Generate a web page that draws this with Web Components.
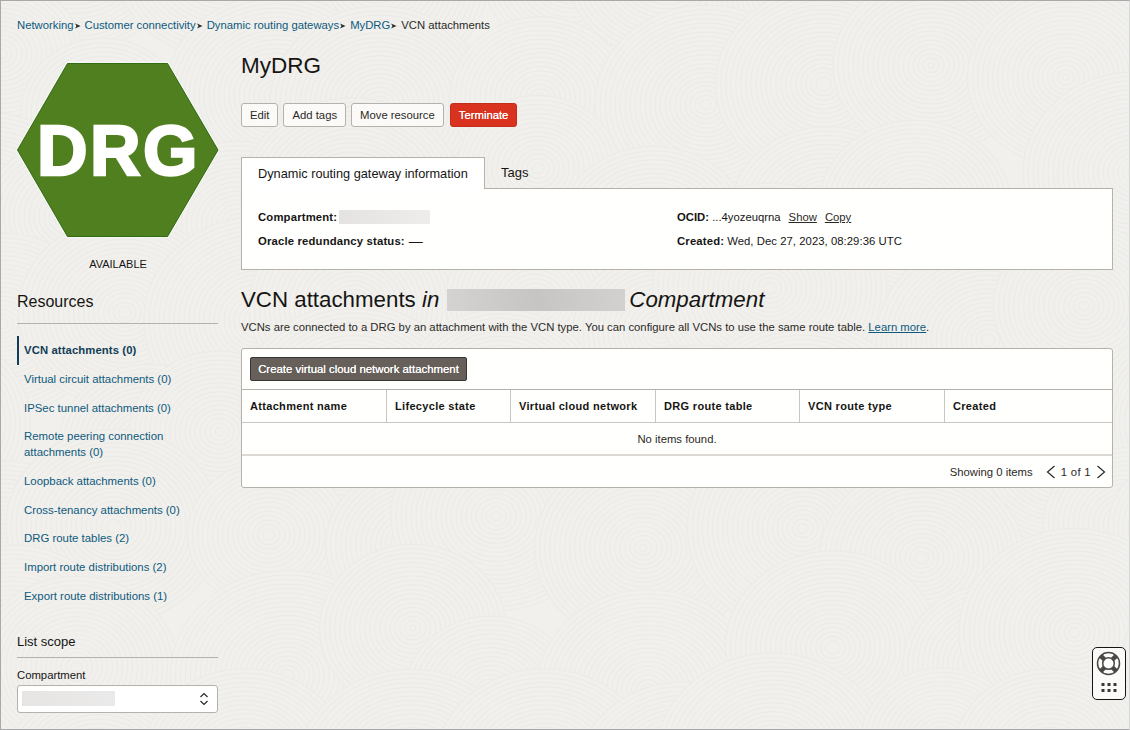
<!DOCTYPE html>
<html lang="en">
<head>
<meta charset="utf-8">
<title>MyDRG</title>
<style>
  html, body { margin: 0; height: 100%; }
  body { font: 11.3px/16px "Liberation Sans", Arial, sans-serif; color: #161513; background: #f1f0ed; }
</style>
</head>
<body>
<oci-page>
  <oci-breadcrumb slot="crumbs" items="Networking|Customer connectivity|Dynamic routing gateways|MyDRG|VCN attachments"></oci-breadcrumb>
  <oci-sidebar slot="side"></oci-sidebar>
  <oci-details slot="main"></oci-details>
  <oci-attachments slot="main"></oci-attachments>
</oci-page>
<oci-help></oci-help>

<script>
class OciPage extends HTMLElement {
  constructor() {
    super();
    this.attachShadow({ mode: "open" });
  }

  static get styles() {
    return /* css */`
      :host {
        display: block;
        position: relative;
        box-sizing: border-box;
        width: 1130px;
        height: 730px;
        overflow: hidden;
        border: 1px solid #a9a9a9;
        border-right-color: #d8d8d8;
      }
      .swirls { position: absolute; inset: 0; width: 100%; height: 100%; }
      .content {
        position: relative;
        display: grid;
        grid-template-columns: 201px 872px;
        column-gap: 23px;
        padding: 16px 0 0 16px;
      }
      .crumbs { grid-column: 1 / 3; height: 34px; }
      .side { padding-top: 12px; }
      .main { padding-top: 1px; }
    `;
  }

  swirls() {
    // jittered grid of concentric rings, later ones cover earlier ones
    let out = "";
    let seed = 11;
    const rnd = () => (seed = (seed * 9301 + 49297) % 233280) / 233280;
    for (let y = -30; y < 820; y += 115) {
      for (let x = -30; x < 1240; x += 140) {
        const cx = x + rnd() * 90 - 45;
        const cy = y + rnd() * 70 - 35;
        const r = 78 + rnd() * 40;
        out += `<ellipse cx="${cx}" cy="${cy}" rx="${r}" ry="${r * 0.9}" fill="#f1f0ed" stroke="none"/>`;
        for (let i = r; i > 3; i -= 5) {
          out += `<ellipse cx="${cx}" cy="${cy}" rx="${i}" ry="${i * 0.9}" fill="none"/>`;
        }
      }
    }
    return out;
  }

  connectedCallback() {
    this.shadowRoot.innerHTML = /* html */`
      <style>${OciPage.styles}</style>
      <svg class="swirls" stroke="#ecebe7" stroke-width="1.2">${this.swirls()}</svg>
      <div class="content">
        <div class="crumbs"><slot name="crumbs"></slot></div>
        <div class="side"><slot name="side"></slot></div>
        <div class="main"><slot name="main"></slot></div>
      </div>
    `;
  }
}

class OciBreadcrumb extends HTMLElement {
  constructor() {
    super();
    this.attachShadow({ mode: "open" });
  }

  connectedCallback() {
    const items = this.getAttribute("items").split("|");
    const sep = `<svg width="6" height="6" viewBox="0 0 6 6"><path d="M0 .5 5.500 3 0 5.500 1.500 3z" fill="#2c2a27"/></svg>`;
    this.shadowRoot.innerHTML = /* html */`
      <style>
        :host { display: block; }
        div { display: flex; align-items: center; line-height: 16px; }
        span { color: #0e5a7d; }
        span:last-child { color: #2c2a27; }
        svg { margin: 1px 4px 0 1px; }
      </style>
      <div>${items.map((t, i) => `<span>${t}</span>${i < items.length - 1 ? sep : ""}`).join("")}</div>
    `;
  }
}

class OciSidebar extends HTMLElement {
  constructor() {
    super();
    this.attachShadow({ mode: "open" });
  }

  static get styles() {
    return /* css */`
      :host { display: block; }
      .logo { display: block; width: 201px; height: 175px; overflow: visible; }
      .state { text-align: center; margin-top: 18px; color: #161513; font-size: 11px; padding-left: 1px; }
      h3 { font-size: 16px; line-height: 20px; font-weight: 400; margin: 20px 0 0; padding-bottom: 11px; border-bottom: 1px solid #b5b1ab; }
      nav { margin-top: 12px; display: flex; flex-direction: column; font-size: 11.4px; }
      a {
        display: block;
        padding: 6.33px 16px 6.33px 7px;
        line-height: 16px;
        color: #0e5a7d;
      }
      a.on { font-weight: 700; color: #123d57; border-left: 2px solid #123d57; padding-left: 5px; font-size: 11.3px; letter-spacing: .1px; }
      .scope { font-size: 13px; line-height: 18px; margin-top: 23px; padding-bottom: 6px; border-bottom: 1px solid #b5b1ab; }
      label { display: block; margin-top: 9px; line-height: 16px; }
      .select {
        box-sizing: border-box;
        display: flex;
        align-items: center;
        justify-content: space-between;
        height: 28px;
        margin-top: 2px;
        padding: 0 8px 0 4px;
        background: #fff;
        border: 1px solid #b5b1ab;
        border-radius: 3px;
      }
      .blur { width: 93px; height: 15px; background: linear-gradient(90deg, #e6e5e3, #ebeaea); }
    `;
  }

  connectedCallback() {
    const links = [
      "Virtual circuit attachments (0)",
      "IPSec tunnel attachments (0)",
      "Remote peering connection attachments (0)",
      "Loopback attachments (0)",
      "Cross-tenancy attachments (0)",
      "DRG route tables (2)",
      "Import route distributions (2)",
      "Export route distributions (1)"
    ];
    this.shadowRoot.innerHTML = /* html */`
      <style>${OciSidebar.styles}</style>
      <svg class="logo" viewBox="0 0 201 175">
        <path d="M50.500 .5h100L201 87 150.500 173.500h-100L.5 87z" fill="#4f7f1f" stroke="#fbfaf8" stroke-width="3" stroke-opacity=".6"/>
        <path d="M50.500 .5h100L201 87 150.500 173.500h-100L.5 87z" fill="#4f7f1f" stroke="#2f6d12" stroke-width="1"/>
        <text x="101.500" y="111.500" text-anchor="middle" fill="#fff" stroke="#fff" stroke-width="2.400" letter-spacing="2.500" font-family="Liberation Sans" font-weight="700" font-size="70">DRG</text>
      </svg>
      <div class="state">AVAILABLE</div>
      <h3>Resources</h3>
      <nav>
        <a class="on">VCN attachments (0)</a>
        ${links.map(t => `<a>${t}</a>`).join("")}
      </nav>
      <div class="scope">List scope</div>
      <label>Compartment</label>
      <div class="select">
        <div class="blur"></div>
        <svg width="10" height="14" viewBox="0 0 10 14" fill="none" stroke="#2c2a27" stroke-width="1.200"><path d="M1.500 5 5 1.500 8.500 5M1.500 9 5 12.500 8.500 9"/></svg>
      </div>
    `;
  }
}

class OciDetails extends HTMLElement {
  constructor() {
    super();
    this.attachShadow({ mode: "open" });
  }

  static get styles() {
    return /* css */`
      :host { display: block; }
      h1 { font-size: 22.5px; line-height: 28px; font-weight: 400; margin: 0; }
      .actions { display: flex; gap: 5px; margin-top: 23px; }
      button {
        font: 11.3px/16px "Liberation Sans", Arial, sans-serif;
        height: 24px;
        padding: 0 8px;
        color: #2c2a27;
        background: #fbfaf8;
        border: 1px solid #b5b1ab;
        border-radius: 3px;
      }
      button.danger { margin-left: 1px; color: #fff; background: #d9321f; border-color: #c42d1b; text-shadow: 0 0 .6px #fff; }
      .tabs { display: flex; margin-top: 30px; position: relative; z-index: 1; }
      .tab { box-sizing: border-box; height: 32px; padding: 7px 16px 0; font-size: 13px; line-height: 18px; white-space: nowrap; }
      .tab.on { width: 244px; background: #fff; border: 1px solid #b5b1ab; border-bottom: 0; font-size: 12.750px; }
      .panel {
        box-sizing: border-box;
        height: 82px;
        margin-top: -1px;
        padding: 20px 16px 0;
        background: #fffffe;
        border: 1px solid #b5b1ab;
        display: grid;
        grid-template-columns: 419px 1fr;
        grid-auto-rows: 24px;
      }
      .row { display: flex; align-items: center; height: 16px; white-space: pre; }
      b { letter-spacing: .17px; }
      b.tight { letter-spacing: 0; }
      u { margin-left: 8px; color: #2c2a27; }
      .date { margin-left: 3px; letter-spacing: .05px; }
      .dash { margin-left: 4px; font-size: 14px; line-height: 16px; }
      .blur { width: 91px; height: 14px; margin-left: 2px; background: linear-gradient(90deg, #e4e3e1, #eeedeb); }
    `;
  }

  connectedCallback() {
    this.shadowRoot.innerHTML = /* html */`
      <style>${OciDetails.styles}</style>
      <h1>MyDRG</h1>
      <div class="actions">
        <button>Edit</button><button>Add tags</button><button>Move resource</button><button class="danger">Terminate</button>
      </div>
      <div class="tabs">
        <div class="tab on">Dynamic routing gateway information</div>
        <div class="tab off">Tags</div>
      </div>
      <div class="panel">
        <div class="row"><b>Compartment:</b><div class="blur"></div></div>
        <div class="row"><b class="tight">OCID:</b> ...4yozeuqrna<u>Show</u><u>Copy</u></div>
        <div class="row"><b>Oracle redundancy status:</b><span class="dash">&#8212;</span></div>
        <div class="row"><b>Created:</b><span class="date">Wed, Dec 27, 2023, 08:29:36 UTC</span></div>
      </div>
    `;
  }
}

class OciAttachments extends HTMLElement {
  constructor() {
    super();
    this.attachShadow({ mode: "open" });
  }

  static get styles() {
    return /* css */`
      :host { display: block; }
      h2 { display: flex; align-items: center; font-size: 22.300px; line-height: 28px; font-weight: 400; margin: 16px 0 0; white-space: pre; }
      .blur { width: 178px; height: 22px; margin: 0 4px 0 8px; background: linear-gradient(90deg, #d4d3d1, #c6c5c3 50%, #d2d1cf); }
      p { margin: 5px 0 0; line-height: 16px; color: #2c2a27; white-space: nowrap; }
      p a { color: #0e5a7d; text-decoration: underline; }
      .card {
        box-sizing: border-box;
        height: 140px;
        margin-top: 13px;
        background: #fffffe;
        border: 1px solid #b5b1ab;
        border-radius: 3px;
      }
      .bar { height: 41px; box-sizing: border-box; padding: 8px; border-bottom: 1px solid #b5b1ab; }
      .create {
        font: 11.4px/16px "Liberation Sans", Arial, sans-serif;
        display: block;
        height: 24px;
        width: 217px;
        padding: 0;
        color: #fff;
        text-shadow: 0 0 .5px #fff;
        background: #665f5a;
        border: 1px solid #3a3631;
        border-radius: 2px;
      }
      .head { display: grid; grid-template-columns: 144px 124px 145px 144px 145px 1fr; height: 33px; box-sizing: border-box; border-bottom: 1px solid #c9c6c1; font-size: 11px; }
      .head div { padding: 8px 8px 0; font-weight: 700; letter-spacing: .32px; border-left: 1px solid #c9c6c1; line-height: 16px; }
      .head div:first-child { border-left: 0; }
      .empty { height: 33px; box-sizing: border-box; padding-top: 8px; text-align: center; border-bottom: 2px solid #dcd9d5; color: #2c2a27; }
      .foot { display: flex; align-items: center; justify-content: flex-end; height: 31px; padding-right: 6px; color: #2c2a27; }
      .foot svg { display: block; }
      .pages { margin: 0 5px; letter-spacing: .35px; }
      .count { margin-right: 13px; }
    `;
  }

  connectedCallback() {
    this.shadowRoot.innerHTML = /* html */`
      <style>${OciAttachments.styles}</style>
      <h2>VCN attachments <i>in</i><span class="blur"></span><i>Compartment</i></h2>
      <p>VCNs are connected to a DRG by an attachment with the VCN type. You can configure all VCNs to use the same route table. <a>Learn more</a>.</p>
      <div class="card">
        <div class="bar"><button class="create">Create virtual cloud network attachment</button></div>
        <div class="head">
          <div>Attachment name</div><div>Lifecycle state</div><div>Virtual cloud network</div><div>DRG route table</div><div>VCN route type</div><div>Created</div>
        </div>
        <div class="empty">No items found.</div>
        <div class="foot">
          <span class="count">Showing 0 items</span>
          <svg width="10" height="14" viewBox="0 0 10 14" fill="none" stroke="#2c2a27" stroke-width="1.200"><path d="M8.500 1 1.500 7l7 6"/></svg>
          <span class="pages">1 of 1</span>
          <svg width="10" height="14" viewBox="0 0 10 14" fill="none" stroke="#2c2a27" stroke-width="1.200"><path d="M1.500 1l7 6-7 6"/></svg>
        </div>
      </div>
    `;
  }
}

class OciHelp extends HTMLElement {
  constructor() {
    super();
    this.attachShadow({ mode: "open" });
  }

  connectedCallback() {
    this.shadowRoot.innerHTML = /* html */`
      <style>
        :host {
          position: fixed;
          left: 1092px;
          top: 647px;
          box-sizing: border-box;
          width: 34px;
          height: 53px;
          background: #fbfaf8;
          border: 1.5px solid #161513;
          border-radius: 5px;
        }
        svg { display: block; }
      </style>
      <svg width="31" height="50" viewBox="0 0 31 50">
        <circle cx="15.500" cy="15.500" r="11" fill="none" stroke="#4a4744" stroke-width="1.500"/>
        <circle cx="15.500" cy="15.500" r="5.800" fill="#fff" stroke="#4a4744" stroke-width="1.500"/>
        <path d="M7.800 7.800 11.500 11.500M23.200 7.800 19.500 11.500M7.800 23.200 11.500 19.500M23.200 23.200 19.500 19.500" stroke="#4a4744" stroke-width="4.500"/>
        <g fill="#3a3836">
          <rect x="8.500" y="35" width="3" height="3"/><rect x="14.500" y="35" width="3" height="3"/><rect x="20.500" y="35" width="3" height="3"/>
          <rect x="8.500" y="41" width="3" height="3"/><rect x="14.500" y="41" width="3" height="3"/><rect x="20.500" y="41" width="3" height="3"/>
        </g>
      </svg>
    `;
  }
}

customElements.define("oci-page", OciPage);
customElements.define("oci-breadcrumb", OciBreadcrumb);
customElements.define("oci-sidebar", OciSidebar);
customElements.define("oci-details", OciDetails);
customElements.define("oci-attachments", OciAttachments);
customElements.define("oci-help", OciHelp);
</script>
</body>
</html>
